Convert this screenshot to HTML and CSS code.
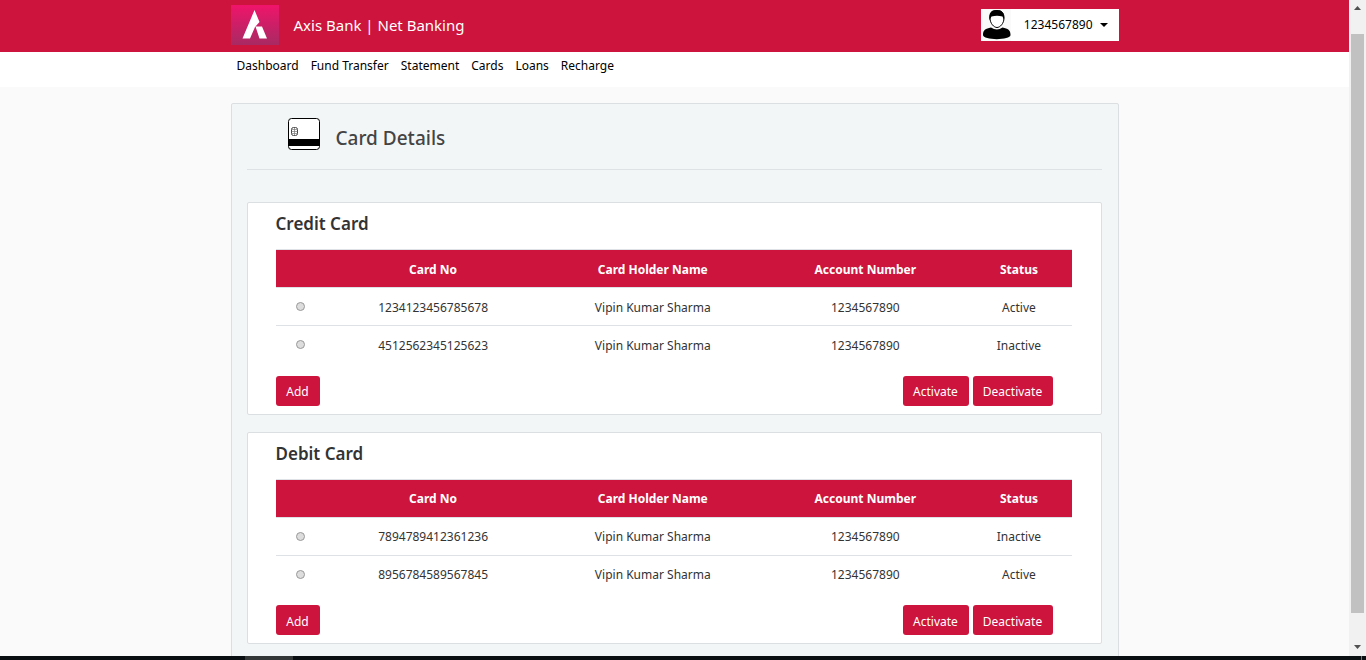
FILE: index.html
```html
<!DOCTYPE html>
<html lang="en">
<head>
<meta charset="utf-8">
<title>Axis Bank | Net Banking</title>
<link rel="stylesheet" href="styles.css">
</head>
<body>
<div class="window">
  <div class="page">
    <header class="header">
      <div class="container header-row">
        <svg class="logo" viewBox="0 0 48 40" preserveAspectRatio="none" aria-label="Axis Bank logo">
          <defs><linearGradient id="logo-bg" x1="0" y1="0" x2="0" y2="1"><stop offset="0" stop-color="#f0146a"/><stop offset="1" stop-color="#a82a63"/></linearGradient></defs>
          <rect width="48" height="40" fill="url(#logo-bg)"/>
          <path d="M23.500 5L28.500 17 24 22 19 33.500H11.500ZM24.500 21.500H31L36 33.500H28.500Z" fill="#fff"/>
        </svg>
        <span class="brand">Axis Bank | Net Banking</span>
        <button class="account" type="button">
          <svg class="avatar" viewBox="0 0 30 32" aria-hidden="true">
            <rect width="30" height="32" fill="#fafafa"/>
            <path d="M2 26C2 21 4.500 19.500 10 18.500Q16 22.500 21.500 18.500C27 19.500 29.500 21 29.500 26C29.500 31.500 2 31.500 2 26Z" fill="#000"/>
            <path d="M9 9C9 4 11 1.500 16 1.500S23 4 23 9C23 14.500 19 18.500 16 18.500S9 14.500 9 9Z" fill="#fff" stroke="#000"/>
            <path d="M8.500 11C7.500 4 10 1 15.500 1S24 4 23 11L21.500 7.500Q16 6 10.500 7.500Z" fill="#000"/>
          </svg>
          <span>1234567890</span>
          <svg class="caret" viewBox="0 0 8 4" aria-hidden="true"><path d="M0 0H8L4 4Z"/></svg>
        </button>
      </div>
    </header>
    <nav class="nav">
      <div class="container nav-row">
        <a href="#">Dashboard</a><a href="#">Fund Transfer</a><a href="#">Statement</a><a href="#">Cards</a><a href="#">Loans</a><a href="#">Recharge</a>
      </div>
    </nav>
    <main class="container panel">
      <div class="panel-head">
        <svg class="card-icon" viewBox="0 0 32 32" aria-hidden="true">
          <rect x=".5" y=".5" width="31" height="31" rx="3" fill="#fff" stroke="#000"/>
          <path d="M0 21H32V28H0Z"/>
          <rect x="3.500" y="9.500" width="6" height="8" rx="2" fill="#fff" stroke="#444"/>
          <path d="M3.500 13.500H9.500M6.500 9.500V17.500M4 11.500H9M4 15.500H9" stroke="#777" stroke-width=".7"/>
        </svg>
        <h1 class="panel-title">Card Details</h1>
      </div>
      <section class="card">
        <h2 class="card-title">Credit Card</h2>
        <table class="table">
          <thead><tr><th class="col-pick"></th><th class="col-no">Card No</th><th class="col-name">Card Holder Name</th><th class="col-account">Account Number</th><th class="col-status">Status</th></tr></thead>
          <tbody>
            <tr><td><input class="radio" type="radio" name="credit" aria-label="1234123456785678"></td><td>1234123456785678</td><td>Vipin Kumar Sharma</td><td>1234567890</td><td>Active</td></tr>
            <tr><td><input class="radio" type="radio" name="credit" aria-label="4512562345125623"></td><td>4512562345125623</td><td>Vipin Kumar Sharma</td><td>1234567890</td><td>Inactive</td></tr>
          </tbody>
        </table>
        <div class="actions">
          <button class="btn btn-add" type="button">Add</button>
          <button class="btn btn-on" type="button">Activate</button>
          <button class="btn btn-off" type="button">Deactivate</button>
        </div>
      </section>
      <section class="card">
        <h2 class="card-title">Debit Card</h2>
        <table class="table">
          <thead><tr><th class="col-pick"></th><th class="col-no">Card No</th><th class="col-name">Card Holder Name</th><th class="col-account">Account Number</th><th class="col-status">Status</th></tr></thead>
          <tbody>
            <tr><td><input class="radio" type="radio" name="debit" aria-label="7894789412361236"></td><td>7894789412361236</td><td>Vipin Kumar Sharma</td><td>1234567890</td><td>Inactive</td></tr>
            <tr><td><input class="radio" type="radio" name="debit" aria-label="8956784589567845"></td><td>8956784589567845</td><td>Vipin Kumar Sharma</td><td>1234567890</td><td>Active</td></tr>
          </tbody>
        </table>
        <div class="actions">
          <button class="btn btn-add" type="button">Add</button>
          <button class="btn btn-on" type="button">Activate</button>
          <button class="btn btn-off" type="button">Deactivate</button>
        </div>
      </section>
    </main>
  </div>
  <div class="scrollbar" aria-hidden="true">
    <svg class="arrow" viewBox="0 0 17 17"><path d="M5 10H12L8.500 6Z"/></svg>
    <div class="track"><div class="thumb"></div></div>
    <svg class="arrow" viewBox="0 0 17 17"><path d="M5 6H12L8.500 10Z"/></svg>
  </div>
  <div class="taskbar"><span class="task"></span><span class="show-desktop"></span></div>
</div>
</body>
</html>
```
FILE: styles.css
```css
* { box-sizing: border-box; }
body {
  margin: 0;
  font: 12px/18px "Noto Sans", "Open Sans", sans-serif;
  color: #333;
  background: #fafafa;
}
button { font: inherit; border: 0; cursor: pointer; }

.window {
  display: grid;
  grid-template-columns: minmax(0, 1fr) 17px;
  grid-template-rows: minmax(0, 1fr) 4px;
  height: 100vh;
}
.page { overflow: hidden; }
.container { max-width: 888px; margin: 0 auto; }

.header { background: #cc143c; padding: 5px 0 7px; }
.header-row { display: flex; align-items: center; }
.logo { width: 48px; height: 40px; }
.brand { margin-left: 15px; font-size: 15px; line-height: 24px; color: #fff; }
.account {
  display: flex;
  align-items: center;
  height: 32px;
  margin-left: auto;
  padding: 0 11px 0 0;
  background: #fff;
  color: #000;
}
.avatar { width: 30px; height: 32px; margin-right: 13px; }
.caret { width: 8px; height: 4px; margin-left: 7px; }

.nav { background: #fff; padding: 5px 0 12px; }
.nav-row { display: flex; gap: 12px; padding-left: 6px; }
.nav a { color: #000; text-decoration: none; }

.panel {
  margin-top: 16px;
  padding: 0 16px 16px 15px;
  background: #f3f6f7;
  border: 1px solid #dcdfe1;
  border-radius: 2px;
}
.panel-head {
  display: flex;
  gap: 16px;
  height: 66px;
  margin-bottom: 32px;
  padding: 14px 0 0 41px;
  border-bottom: 1px solid #dfe2e4;
}
.card-icon { width: 32px; height: 32px; }
.panel-title { margin: 6px 0 0; font-size: 19px; line-height: 28px; font-weight: 500; color: #444; }

.card {
  margin-bottom: 17px;
  padding: 8px 29px 8px 28px;
  background: #fff;
  border: 1px solid #dcdfe1;
  border-radius: 2px;
}
.card-title { margin: 0 0 12px; font-size: 17px; line-height: 26px; font-weight: 600; color: #333; }

.table { width: 100%; table-layout: fixed; border-collapse: collapse; text-align: center; }
.table th, .table td { height: 38px; padding: 2px 0 0; border-top: 1px solid #dee2e6; }
.table th { background: #cc143c; color: #fff; font-weight: 700; }
.col-pick { width: 6.2%; }
.col-no { width: 27.2%; }
.col-name { width: 28%; }
.col-account { width: 25.4%; }
.col-status { width: 13.2%; }
.radio {
  appearance: none;
  display: block;
  width: 9px;
  height: 9px;
  margin: 0 auto 2px;
  border: 1px solid #999;
  border-radius: 50%;
  background: #ddd;
}

.actions { display: flex; gap: 4px; padding: 12px 19px 0 0; }
.btn {
  height: 30px;
  padding: 3px 0 0;
  border-radius: 3px;
  background: #cc143c;
  color: #fff;
}
.btn-add { width: 44px; margin-right: auto; }
.btn-on { width: 66px; }
.btn-off { width: 80px; }

.scrollbar { display: flex; flex-direction: column; background: #f1f1f1; }
.arrow { width: 17px; height: 17px; fill: #505050; }
.track { flex: 1; padding: 17px 2px 26px; }
.thumb { height: 100%; background: #c1c1c1; }

.taskbar { grid-column: 1 / -1; display: flex; justify-content: space-between; padding: 0 4px 0 245px; background: #0a0f11; }
.task { width: 48px; background: #333737; }
.show-desktop { width: 1px; background: #777; }
```
